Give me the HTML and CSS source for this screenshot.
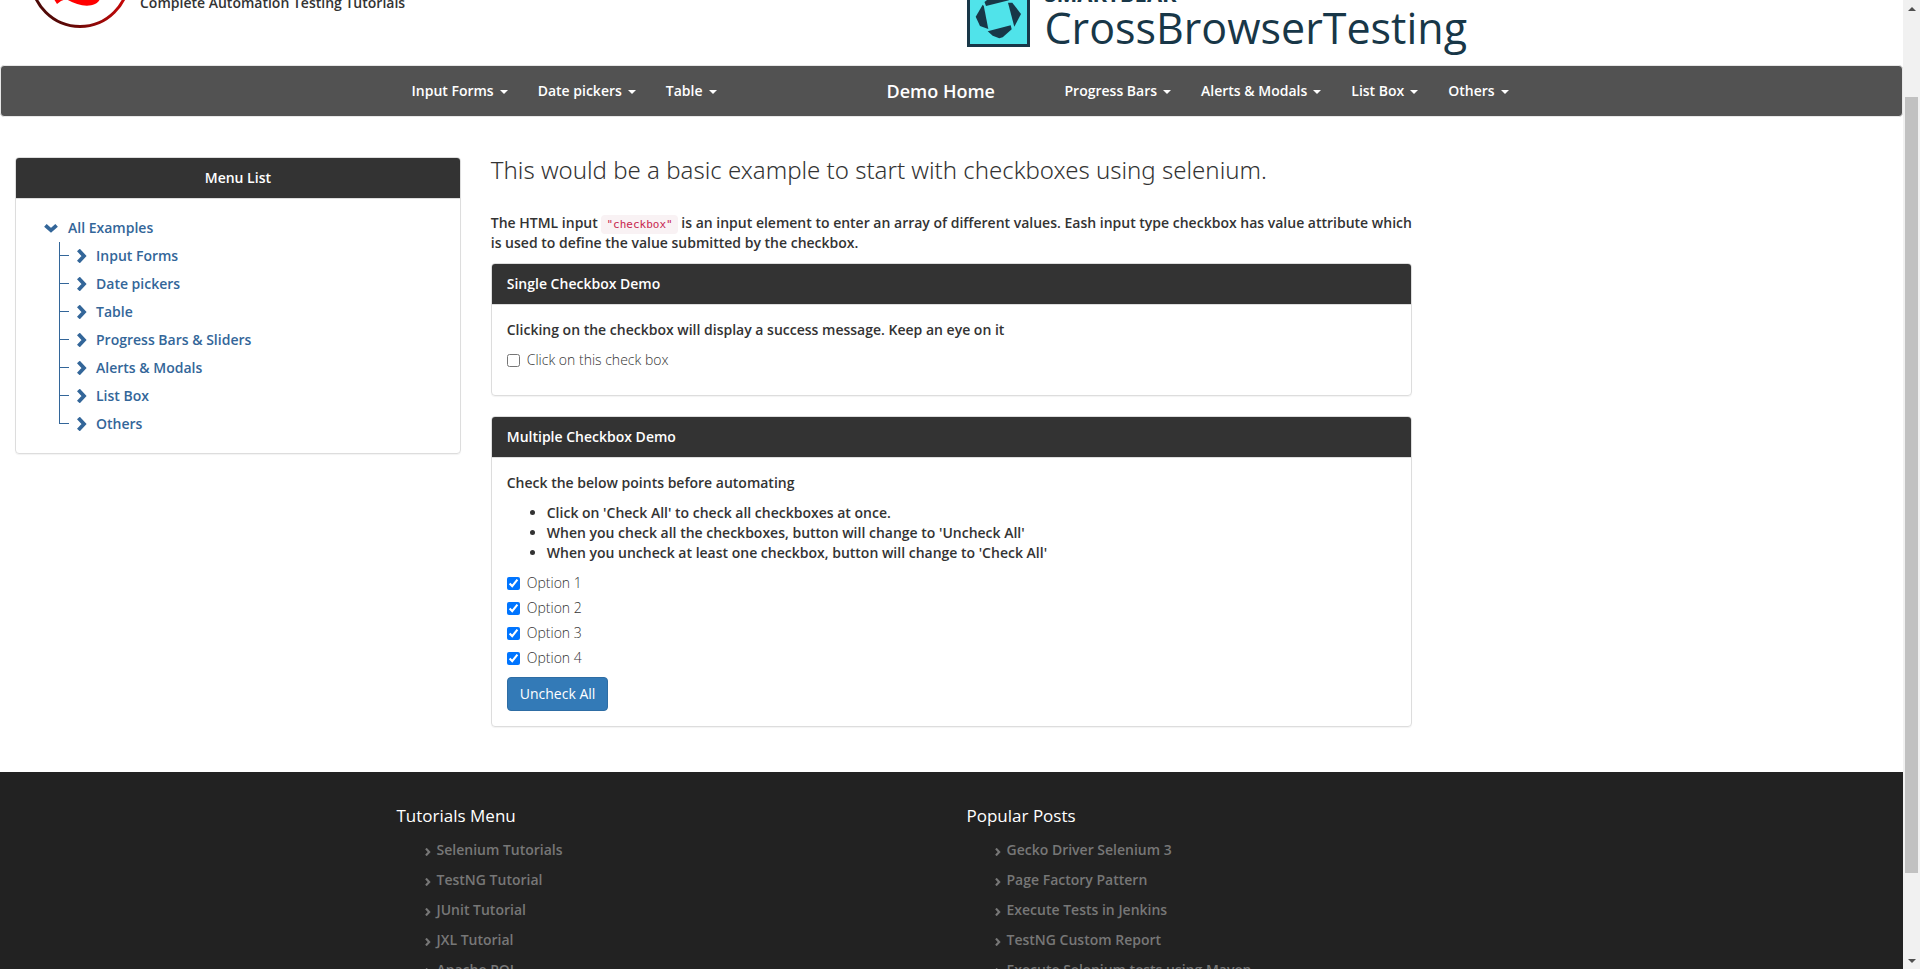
FILE: index.html
```html
<!DOCTYPE html>
<html lang="en">
<head>
<meta charset="utf-8">
<title>Checkbox Demo</title>
<link rel="stylesheet" href="styles.css">
</head>
<body>
<svg class="defs" aria-hidden="true">
  <symbol id="right" viewBox="0 0 14 14"><path d="M3.4 1 9 7l-5.600 6" fill="none" stroke="currentColor" stroke-width="3.800"/></symbol>
  <symbol id="down" viewBox="0 0 14 14"><path d="M1.400 4.300 7 9.300l5.600-5" fill="none" stroke="currentColor" stroke-width="3.800"/></symbol>
</svg>
<div class="page">
  <header class="topbar">
    <a class="brand" href="#">
      <svg class="brand-mark" viewBox="0 0 100 100" aria-label="Logo">
        <defs><linearGradient id="ring"><stop offset="0" stop-color="#4a0a08"/><stop offset=".35" stop-color="#5a0806"/><stop offset="1" stop-color="#cc0808"/></linearGradient></defs>
        <circle cx="50" cy="50" r="48.500" fill="#fff" stroke="url(#ring)" stroke-width="3"/>
        <path d="M22 68l5 8 4-3 5-2c9 5 20 9 29 5 4-2 6-5 5-10l-20-16z" fill="#f00"/>
      </svg>
      <span class="tagline">Complete Automation Testing Tutorials</span>
    </a>
    <a class="sponsor" href="#">
      <svg class="sponsor-mark" viewBox="0 0 63 63" aria-hidden="true">
        <rect x="1.500" y="1.500" width="60" height="60" fill="#50e3ea" stroke="#183748" stroke-width="3"/>
        <g fill="#183748">
          <path d="M19 22l-1.500-4L28 9.500l4-.5 10 7.300z"/>
          <path d="M15.700 20.700l-7 12L13 42l8.300 3-4.500-23z"/>
          <path d="M20.700 47.300l23-6 1 4-9 8-3.400 1-6.600-2.600z"/>
          <path d="M41 18.700h4.300L54 30l-6.700 12.700z"/>
        </g>
      </svg>
      <span class="sponsor-name"><small>SMARTBEAR</small><span>CrossBrowserTesting</span></span>
    </a>
  </header>

  <nav class="navbar">
    <div class="navbar-inner">
      <div class="nav-group">
        <a class="drop" href="#">Input Forms</a>
        <a class="drop" href="#">Date pickers</a>
        <a class="drop" href="#">Table</a>
      </div>
      <a class="home" href="#">Demo Home</a>
      <div class="nav-group">
        <a class="drop" href="#">Progress Bars</a>
        <a class="drop" href="#">Alerts &amp; Modals</a>
        <a class="drop" href="#">List Box</a>
        <a class="drop" href="#">Others</a>
      </div>
    </div>
  </nav>

  <div class="columns">
    <aside>
      <section class="panel">
        <h2 class="panel-head centered">Menu List</h2>
        <div class="panel-body tree">
          <a href="#"><svg><use href="#down"/></svg>All Examples</a>
          <ul>
            <li><a href="#"><svg><use href="#right"/></svg>Input Forms</a></li>
            <li><a href="#"><svg><use href="#right"/></svg>Date pickers</a></li>
            <li><a href="#"><svg><use href="#right"/></svg>Table</a></li>
            <li><a href="#"><svg><use href="#right"/></svg>Progress Bars &amp; Sliders</a></li>
            <li><a href="#"><svg><use href="#right"/></svg>Alerts &amp; Modals</a></li>
            <li><a href="#"><svg><use href="#right"/></svg>List Box</a></li>
            <li><a href="#"><svg><use href="#right"/></svg>Others</a></li>
          </ul>
        </div>
      </section>
    </aside>
    <main>
      <h1>This would be a basic example to start with checkboxes using selenium.</h1>
      <p>The HTML input <code>"checkbox"</code> is an input element to enter an array of different values. Eash input type checkbox has value attribute which is used to define the value submitted by the checkbox.</p>
      <section class="panel single">
        <h2 class="panel-head">Single Checkbox Demo</h2>
        <div class="panel-body">
          <p>Clicking on the checkbox will display a success message. Keep an eye on it</p>
          <label class="check"><input type="checkbox">Click on this check box</label>
        </div>
      </section>
      <section class="panel">
        <h2 class="panel-head">Multiple Checkbox Demo</h2>
        <div class="panel-body">
          <p>Check the below points before automating</p>
          <ul class="points">
            <li>Click on 'Check All' to check all checkboxes at once.</li>
            <li>When you check all the checkboxes, button will change to 'Uncheck All'</li>
            <li>When you uncheck at least one checkbox, button will change to 'Check All'</li>
          </ul>
          <label class="check"><input type="checkbox" checked>Option 1</label>
          <label class="check"><input type="checkbox" checked>Option 2</label>
          <label class="check"><input type="checkbox" checked>Option 3</label>
          <label class="check"><input type="checkbox" checked>Option 4</label>
          <button class="btn" type="button">Uncheck All</button>
        </div>
      </section>
    </main>
  </div>

  <footer>
    <div class="footer-inner">
      <section>
        <h3>Tutorials Menu</h3>
        <ul>
          <li><svg><use href="#right"/></svg><a href="#">Selenium Tutorials</a></li>
          <li><svg><use href="#right"/></svg><a href="#">TestNG Tutorial</a></li>
          <li><svg><use href="#right"/></svg><a href="#">JUnit Tutorial</a></li>
          <li><svg><use href="#right"/></svg><a href="#">JXL Tutorial</a></li>
          <li><svg><use href="#right"/></svg><a href="#">Apache POI</a></li>
        </ul>
      </section>
      <section>
        <h3>Popular Posts</h3>
        <ul>
          <li><svg><use href="#right"/></svg><a href="#">Gecko Driver Selenium 3</a></li>
          <li><svg><use href="#right"/></svg><a href="#">Page Factory Pattern</a></li>
          <li><svg><use href="#right"/></svg><a href="#">Execute Tests in Jenkins</a></li>
          <li><svg><use href="#right"/></svg><a href="#">TestNG Custom Report</a></li>
          <li><svg><use href="#right"/></svg><a href="#">Execute Selenium tests using Maven</a></li>
        </ul>
      </section>
    </div>
  </footer>
</div>
<div class="scrollbar" aria-hidden="true">
  <i class="arrow up"></i>
  <i class="thumb"></i>
  <i class="arrow dn"></i>
</div>
</body>
</html>
```
FILE: styles.css
```css
* { box-sizing: border-box; }
body {
  margin: 0;
  height: 100vh;
  overflow: hidden;
  display: flex;
  background: #fff;
  color: #333;
  font: 600 14px/20px "Open Sans", "Noto Sans", sans-serif;
}
a { color: inherit; text-decoration: none; }
ul { margin: 0; padding: 0; list-style: none; }
h1, h2, h3 { margin: 0; }
p { margin: 0 0 10px; }
.defs { position: absolute; width: 0; height: 0; }
.page {
  flex: 1;
  min-width: 0;
  overflow: hidden;
  display: flex;
  flex-direction: column;
}

/* top bar */
.topbar {
  flex: none;
  height: 65px;
  overflow: hidden;
  display: flex;
  align-items: flex-end;
}
.topbar > a { flex: 0 0 50%; }
.brand { display: flex; align-items: flex-end; gap: 10px; padding: 0 0 37px 30px; }
.brand-mark { width: 100px; height: 100px; }
.tagline { padding-bottom: 15px; }
.sponsor { display: flex; align-items: flex-end; gap: 15px; padding: 0 15px 12px; color: #183748; }
.sponsor-mark { width: 63px; height: 63px; margin-bottom: 6px; }
.sponsor-name { display: flex; flex-direction: column; font-size: 43px; line-height: 50px; font-weight: 400; }
.sponsor-name small { margin-bottom: 2px; font-size: 22px; line-height: 16px; font-weight: 700; }

/* navigation */
.navbar {
  flex: none;
  border: 1px solid #e7e7e7;
  border-radius: 4px;
  background: #525252;
  color: #fff;
  margin-bottom: 40px;
}
.navbar-inner {
  display: grid;
  grid-template-columns: 475px 178px auto;
  max-width: 1170px;
  margin: 0 auto;
  padding-left: 30px;
}
.nav-group { display: flex; }
.navbar a { padding: 15px; white-space: nowrap; }
.navbar .home { font-size: 18px; }
.drop::after {
  content: "";
  display: inline-block;
  margin-left: 6px;
  vertical-align: middle;
  border: 4px solid transparent;
  border-top-color: #fff;
  border-bottom: 0;
}

/* content */
.columns { flex: none; display: grid; grid-template-columns: 1fr 2fr 1fr; }
aside, main { padding: 0 15px; }
.panel {
  margin-bottom: 20px;
  border: 1px solid #ddd;
  border-radius: 4px;
  box-shadow: 0 1px 1px rgba(0, 0, 0, .05);
}
.panel-head {
  padding: 10px 15px;
  background: #333;
  color: #fff;
  border-bottom: 1px solid #ddd;
  border-radius: 3px 3px 0 0;
  font-size: 14px;
  font-weight: 600;
}
.centered { text-align: center; }
.panel-body { padding: 15px; }
.single .panel-body { padding-bottom: 20px; }
h1 { padding: 0 0 30px; font: 300 24px/26px "Noto Sans", "Open Sans", sans-serif; }
code {
  padding: 3px 5px;
  border-radius: 4px;
  background: #f9f2f4;
  color: #c7254e;
  font: 500 11px "DejaVu Sans Mono", monospace;
}

/* tree */
.tree { padding: 15px 15px 15px 28px; color: #369; }
.tree a { display: flex; align-items: center; height: 28px; }
.tree svg { width: 14px; height: 14px; margin-right: 10px; }
.tree ul { margin-left: 15px; }
.tree li svg { margin-right: 7px; }
.tree li { display: flex; align-items: center; }
.tree li::before {
  content: "";
  align-self: stretch;
  width: 10px;
  margin-right: 6px;
  background:
    linear-gradient(#369, #369) 0 0 / 1px 100% no-repeat,
    linear-gradient(#369, #369) 0 13px / 10px 1px no-repeat;
}
.tree li:last-child::before { background-size: 1px 14px, 10px 1px; }

/* form */
.check { display: flex; align-items: center; margin: 0 0 5px; height: 20px; font-weight: 300; }
.check input { width: 13px; height: 13px; margin: 0 7px 0 0; }
.points { list-style: disc; padding-left: 40px; margin-bottom: 10px; }
.btn {
  margin: 4px 0 0;
  padding: 6px 12px;
  border: 1px solid #2e6da4;
  border-radius: 4px;
  background: #337ab7;
  color: #fff;
  font: 400 14px/20px "Open Sans", sans-serif;
}

/* footer */
footer { flex: 1 0 auto; margin-top: 25px; background: #222; color: #777; }
.footer-inner {
  display: grid;
  grid-template-columns: 570px 1fr;
  max-width: 1170px;
  margin: 0 auto;
  padding: 34px 0 0 30px;
}
footer h3 { margin-bottom: 14px; color: #fff; font-size: 17px; font-weight: 400; }
footer li { display: flex; align-items: center; height: 20px; margin: 0 0 10px 27px; }
footer svg { width: 8px; height: 8px; margin: 3px 5px 0 0; }

/* scrollbar */
.scrollbar {
  flex: none;
  width: 17px;
  background: #f1f1f1;
  display: grid;
  grid-template-rows: 17px 80px 776px 1fr 17px;
  justify-items: center;
  align-items: center;
}
.arrow { border: 4px solid transparent; }
.up { border-bottom-color: #505050; border-top: 0; }
.dn { grid-row: 5; border-top-color: #505050; border-bottom: 0; }
.thumb { grid-row: 3; width: 13px; height: 100%; background: #c1c1c1; }
```
